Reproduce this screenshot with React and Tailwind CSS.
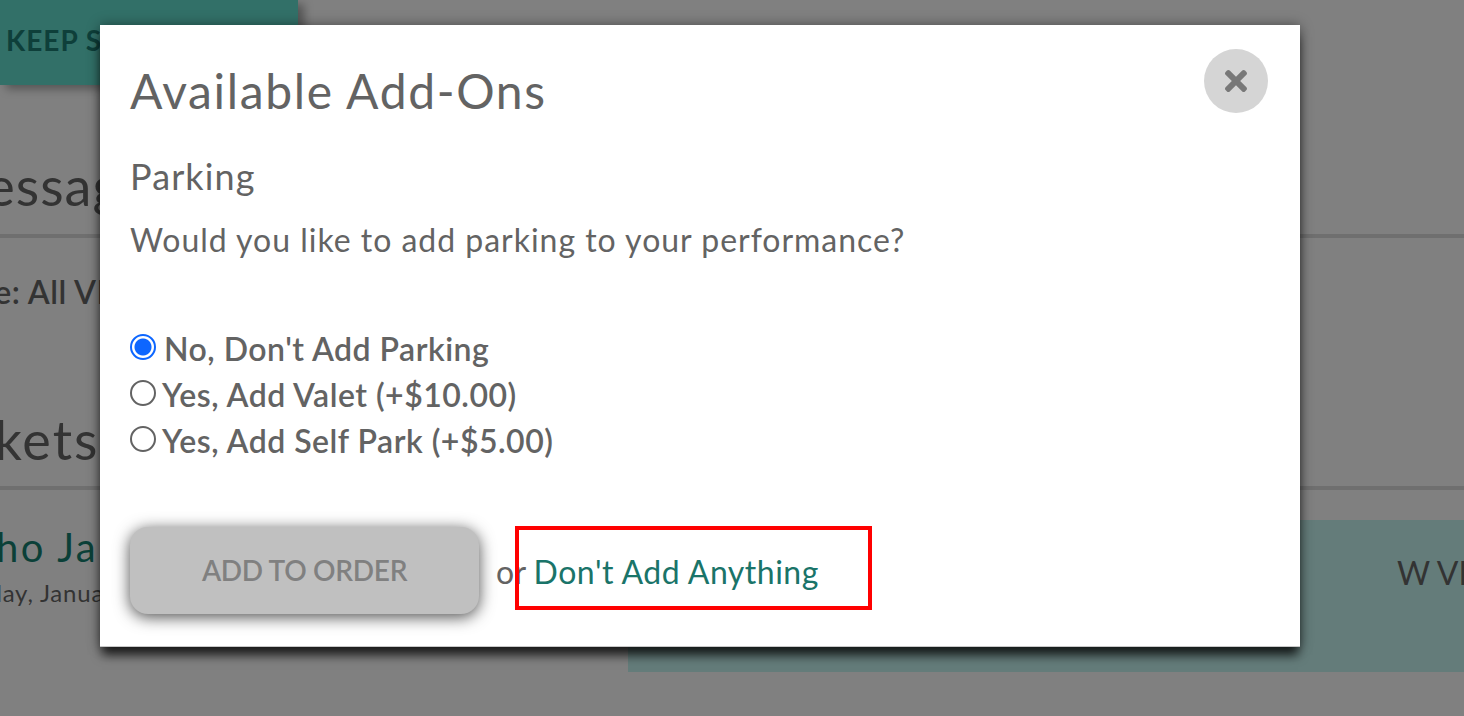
import { FaTimes } from "react-icons/fa";

function ParkingOption({ label, checked = false }) {
  return (
    <label className="flex items-center h-[46px] font-semibold text-[32px] text-[#636363] tracking-[0.5px]">
      <input
        type="radio"
        name="parking"
        defaultChecked={checked}
        className="appearance-none w-[26px] h-[26px] m-0 mr-[6px] mb-[5px] shrink-0 rounded-full border-2 border-[#636363] bg-white checked:border-[#0d66ff] checked:bg-[radial-gradient(circle,#0d66ff_0_8px,#ffffff_9px)]"
      />
      <span className={checked ? "ml-[2px]" : ""}>{label}</span>
    </label>
  );
}

function PageBehind() {
  return (
    <div className="h-[716px] overflow-hidden bg-[#808080] text-[#333333]">
      <div className="w-[298px] h-[85px] flex items-center rounded-br-[18px] bg-[#327068] pl-[6px] pb-[5px] shadow-[6px_4px_10px_rgba(0,0,0,0.35)]">
        <span className="font-bold text-[28px] tracking-[1px] text-[#0e3f3a]">KEEP SHOPPING</span>
      </div>

      <h2 className="mt-[67px] -ml-[64px] text-[54px] tracking-[1px] leading-[68px]">Messages</h2>
      <div className="mt-[14px] h-[4px] bg-[#6f6f6f]" />
      <p className="mt-[34px] -ml-[85px] font-semibold text-[32px] tracking-[0.5px] leading-[40px]">Notice: All VIP</p>

      <h2 className="mt-[94px] -ml-[82px] text-[54px] tracking-[2px] leading-[68px]">Tickets</h2>
      <div className="mt-[12px] h-[4px] bg-[#6f6f6f]" />

      <div className="flex mt-[30px]">
        <div className="w-[628px] shrink-0">
          <p className="text-[40px] leading-[60px] -mt-[3px] text-[#0b4038] -ml-[50px] tracking-[2.4px] whitespace-nowrap">Echo Jam</p>
          <p className="text-[24px] leading-[28px] mt-[2px] -ml-[41px] tracking-[0.8px] whitespace-nowrap">Friday, January</p>
        </div>
        <div className="flex-1 h-[152px] bg-[#647c7a] pl-[769px] pt-[34px] text-[32px] leading-[38px]">
          <span className="whitespace-nowrap">W VIP</span>
        </div>
      </div>
    </div>
  );
}

export default function App() {
  return (
    <div className="relative h-[716px] w-[1464px] overflow-hidden font-['Lato','Liberation_Sans',sans-serif]">
      <PageBehind />

      <div className="absolute left-[100px] top-[25px] w-[1200px] h-[622px] bg-white pl-[30px] pr-[32px] text-[#636363] border-b border-[#c8c8c8] shadow-[0_10px_10px_-2px_rgba(0,0,0,0.75),0_0_12px_rgba(0,0,0,0.4)]">
        <div className="flex justify-between items-start pt-[24px]">
          <h1 className="text-[48px] leading-[84px] tracking-[1.65px]">Available Add-Ons</h1>
          <button className="w-16 h-16 rounded-full bg-[#d5d5d5] flex items-center justify-center text-[#787878]">
            <FaTimes size={32} />
          </button>
        </div>

        <h2 className="mt-[18px] text-[36px] leading-[50px] tracking-[1.1px]">Parking</h2>
        <p className="mt-[17px] text-[32px] leading-[44px] tracking-[0.98px]">Would you like to add parking to your performance?</p>

        <div className="mt-[64px] flex flex-col">
          <ParkingOption label="No, Don't Add Parking" checked />
          <ParkingOption label="Yes, Add Valet (+$10.00)" />
          <ParkingOption label="Yes, Add Self Park (+$5.00)" />
        </div>

        <div className="mt-[63px] flex items-center">
          <button className="w-[349px] h-[87px] pb-[2px] rounded-[18px] bg-[#c0c0c0] font-semibold text-[28px] tracking-[-0.3px] text-[#808080] shadow-[0_3px_16px_rgba(0,0,0,0.7)]">
            ADD TO ORDER
          </button>
          <span className="ml-[17px] pt-[2px] text-[32px] tracking-[0.4px]">or</span>
          <a className="ml-[7px] pt-[2px] text-[32px] tracking-[0.5px] text-[#1a7469]">Don't Add Anything</a>
        </div>
      </div>

      {/* annotation box */}
      <div className="absolute left-[515px] top-[526px] w-[357px] h-[84px] border-4 border-[#ff0000]" />
    </div>
  );
}
